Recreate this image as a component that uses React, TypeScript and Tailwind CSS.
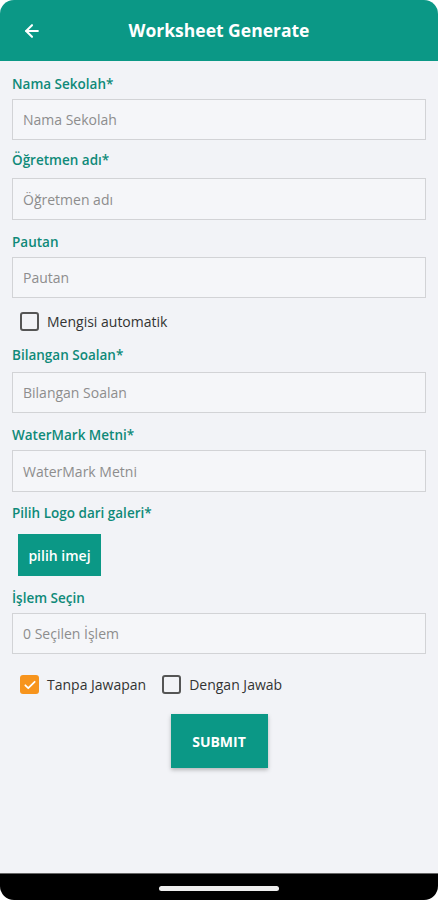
import { ArrowLeft } from "lucide-react";

const font = { fontFamily: '"Open Sans", "Noto Sans", sans-serif' };

function Label({ text, className = "" }: { text: string; className?: string }) {
  return (
    <div className={`h-[20px] text-[13.5px] leading-[20px] font-semibold text-[#0f8a79] ${className}`}>
      {text}
    </div>
  );
}

function Field({ placeholder, className = "" }: { placeholder: string; className?: string }) {
  return (
    <div
      className={`h-[41px] border-[1.5px] border-[#d2d3d6] bg-[#f5f6f9] px-[10px] flex items-center text-[14px] text-[#8d8d8d] ${className}`}
    >
      {placeholder}
    </div>
  );
}

function Check({ label, checked = false }: { label: string; checked?: boolean }) {
  return (
    <div className="flex items-center gap-[8px]">
      {checked ? (
        <span className="w-[19px] h-[19px] rounded-[3px] bg-[#f7941d] flex items-center justify-center">
          <svg width="14" height="14" viewBox="0 0 24 24" fill="none" stroke="white" strokeWidth="3" strokeLinecap="round" strokeLinejoin="round">
            <path d="M4 12.5l5 5L20 6.5" />
          </svg>
        </span>
      ) : (
        <span className="w-[19px] h-[19px] rounded-[3px] border-2 border-[#555]" />
      )}
      <span className="text-[14px] text-[#333]">{label}</span>
    </div>
  );
}

export default function App() {
  return (
    <div className="w-[438px] h-[900px] bg-white flex flex-col" style={font}>
      <header className="h-[61px] bg-[#0b9886] rounded-t-[14px] flex items-center relative">
        <ArrowLeft className="absolute left-[22px] top-[21px] text-white" size={20} strokeWidth={2.5} />
        <h1 className="flex-1 text-center text-white text-[17.5px] font-bold">Worksheet Generate</h1>
      </header>

      <main className="flex-1 bg-[#f2f3f7] px-[12px] flex flex-col">
        <Label text="Nama Sekolah*" className="mt-[13px]" />
        <Field placeholder="Nama Sekolah" className="mt-[5px]" />

        <Label text="Öğretmen adı*" className="mt-[10px]" />
        <Field placeholder="Öğretmen adı" className="mt-[8px] h-[42px]" />

        <Label text="Pautan" className="mt-[12px]" />
        <Field placeholder="Pautan" className="mt-[5px]" />

        <div className="mt-[13px] ml-[8px]">
          <Check label="Mengisi automatik" />
        </div>

        <Label text="Bilangan Soalan*" className="mt-[13px]" />
        <Field placeholder="Bilangan Soalan" className="mt-[7px]" />

        <Label text="WaterMark Metni*" className="mt-[12px]" />
        <Field placeholder="WaterMark Metni" className="mt-[5px] h-[42px]" />

        <Label text="Pilih Logo dari galeri*" className="mt-[11px]" />
        <button className="mt-[11px] ml-[6px] w-[83px] h-[42px] bg-[#0b9886] text-white text-[14px] font-semibold">
          pilih imej
        </button>

        <Label text="İşlem Seçin" className="mt-[12px]" />
        <Field placeholder="0 Seçilen İşlem" className="mt-[5px]" />

        <div className="mt-[20px] ml-[8px] flex items-center gap-[16px]">
          <Check label="Tanpa Jawapan" checked />
          <Check label="Dengan Jawab" />
        </div>

        <div className="mt-[19px] flex justify-center">
          <button className="w-[97px] h-[54px] bg-[#0b9886] text-white text-[14px] font-bold shadow-[0_2px_4px_rgba(0,0,0,0.25)]">
            SUBMIT
          </button>
        </div>
      </main>

      <div className="h-[27px] bg-black rounded-b-[14px] flex justify-center pt-[12px] border-t border-[#666]">
        <div className="w-[120px] h-[5px] rounded-full bg-[#eee]" />
      </div>
    </div>
  );
}
